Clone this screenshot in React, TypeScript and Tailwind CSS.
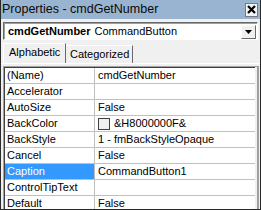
import React from "react";

const rows: { name: string; value: string; swatch?: boolean }[] = [
  { name: "(Name)", value: "cmdGetNumber" },
  { name: "Accelerator", value: "" },
  { name: "AutoSize", value: "False" },
  { name: "BackColor", value: "&H8000000F&", swatch: true },
  { name: "BackStyle", value: "1 - fmBackStyleOpaque" },
  { name: "Cancel", value: "False" },
  { name: "Caption", value: "CommandButton1" },
  { name: "ControlTipText", value: "" },
  { name: "Default", value: "False" },
];

const font = { fontFamily: '"Liberation Sans", Arial, sans-serif' };

export default function App() {
  return (
    <div
      className="w-[261px] h-[210px] overflow-hidden bg-[#f0f0f0] border-l border-r border-b border-[#2a2a2a] flex flex-col text-black"
      style={font}
    >
      {/* title bar */}
      <div className="shrink-0 h-[19px] bg-[#99b4d1] flex items-center justify-between pl-[1px] pr-[2px]">
        <span className="text-[12.5px] leading-none text-[#0a0a0a]">Properties - cmdGetNumber</span>
        <div className="w-[13px] h-[14px] bg-[#f4f4f4] border border-[#7a7a7a] flex items-center justify-center">
          <svg width="9" height="9" viewBox="0 0 9 9">
            <path d="M1 1 L8 8 M8 1 L1 8" stroke="#000" strokeWidth="2.2" />
          </svg>
        </div>
      </div>

      {/* object combo */}
      <div className="shrink-0 mx-[2px] mt-[3px] h-[18px] border-t border-l border-[#696969] border-b border-r border-b-white border-r-white flex">
        <div className="flex-1 bg-white border-t border-l border-[#a0a0a0] flex items-center pl-[3px] text-[11px] leading-none">
          <span className="font-bold">cmdGetNumber</span>
          <span className="ml-[4px]">CommandButton</span>
          <div className="ml-auto mr-[1px] w-[15px] h-[14px] bg-[#f0f0f0] border border-white border-r-[#696969] border-b-[#696969] flex items-center justify-center">
            <svg width="7" height="4" viewBox="0 0 7 4">
              <path d="M0 0 H7 L3.5 4 Z" fill="#000" />
            </svg>
          </div>
        </div>
      </div>

      {/* tabs */}
      <div className="shrink-0 mt-[3px] h-[20px] flex items-end pl-[2px]">
        <div className="relative z-10 h-[20px] w-[63px] bg-[#f0f0f0] border-t border-l border-white border-r border-r-[#696969] flex items-start pl-[5px] pt-[3px] text-[11px] leading-none">
          Alphabetic
        </div>
        <div className="h-[18px] w-[67px] bg-[#f0f0f0] border-t border-white border-r border-r-[#696969] flex items-start pl-[4px] pt-[3px] text-[11px] leading-none">
          Categorized
        </div>
      </div>

      {/* panel */}
      <div className="flex-1 min-h-0 border-t border-white pl-[2px] pr-[1px] pt-[2px] flex flex-col">
        <div className="flex-1 min-h-0 border-l border-t border-[#a0a0a0] border-r-2 border-r-[#a0a0a0]">
          <div className="h-full overflow-hidden border-l border-t border-[#404040] bg-white mr-[2px]">
            {rows.map((r) => (
              <div key={r.name} className="shrink-0 h-[16px] flex border-b border-[#c0c0c0] text-[11px] leading-none">
                <div
                  className={`w-[90px] pl-[2px] flex items-center border-r border-[#c0c0c0] ${
                    r.name === "Caption" ? "bg-[#3399ff] text-white" : ""
                  }`}
                >
                  {r.name}
                </div>
                <div className="flex-1 pl-[3px] flex items-center">
                  {r.swatch && (
                    <span className="w-[12px] h-[12px] border border-[#404040] bg-[#f0f0f0] mr-[4px]" />
                  )}
                  {r.value}
                </div>
              </div>
            ))}
          </div>
        </div>
      </div>
    </div>
  );
}
